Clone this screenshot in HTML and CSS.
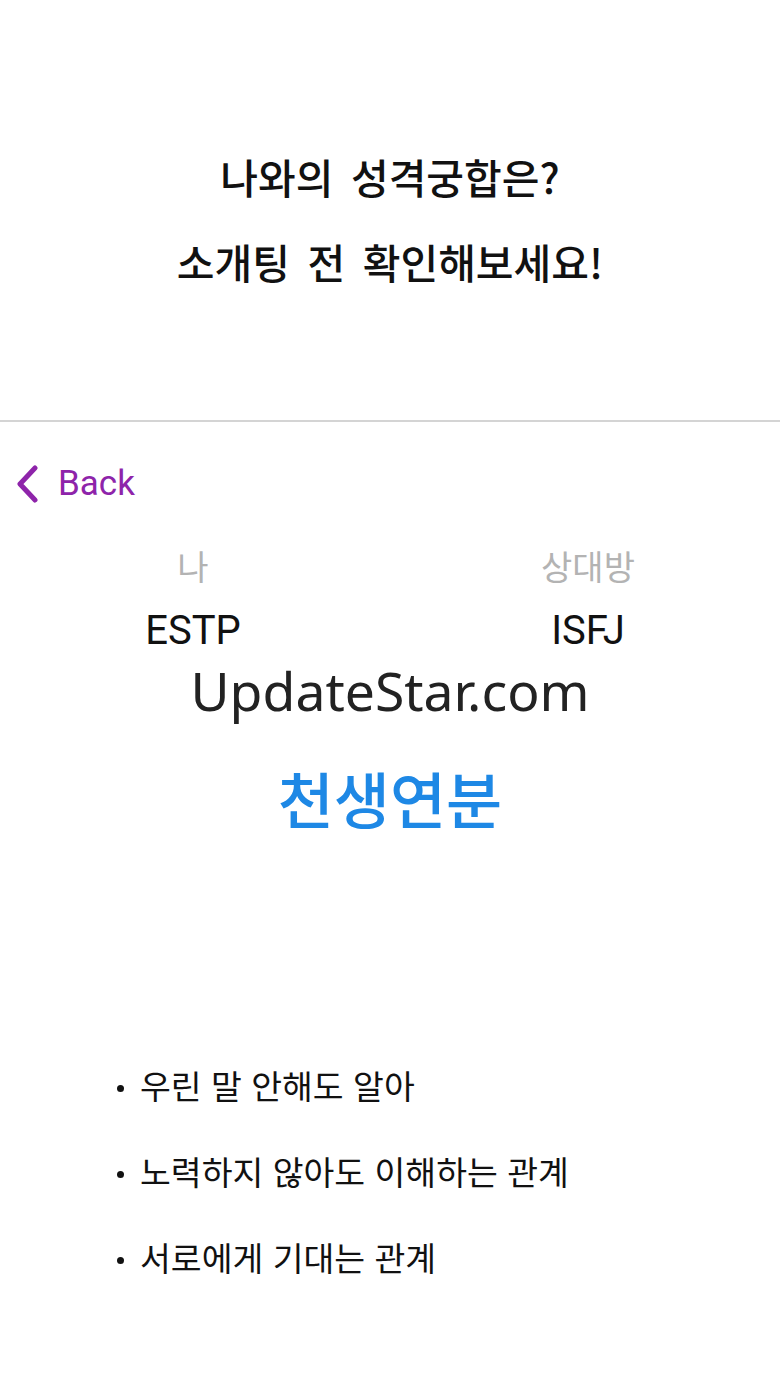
FILE: index.html
```html
<!DOCTYPE html>
<html lang="ko">
<head>
<meta charset="utf-8">
<link rel="stylesheet" href="styles.css">
</head>
<body>
<header class="hero">
  <p class="hero-line">나와의 성격궁합은?</p>
  <p class="hero-line">소개팅 전 확인해보세요!</p>
</header>
<main class="result">
  <a class="back" href="#">
    <svg class="back-icon" width="26" height="38" viewBox="0 0 26 38"><path d="M21 3 L6 19 L21 35" fill="none" stroke="#8e24aa" stroke-width="5" stroke-linecap="round" stroke-linejoin="round"/></svg>
    <span class="back-text">Back</span>
  </a>
  <div class="pair">
    <div class="person">
      <div class="label">나</div>
      <div class="type">ESTP</div>
    </div>
    <div class="person">
      <div class="label">상대방</div>
      <div class="type">ISFJ</div>
    </div>
  </div>
  <div class="watermark">UpdateStar.com</div>
  <div class="verdict">천생연분</div>
  <ul class="points">
    <li class="point"><span class="dot"></span>우린 말 안해도 알아</li>
    <li class="point"><span class="dot"></span>노력하지 않아도 이해하는 관계</li>
    <li class="point"><span class="dot"></span>서로에게 기대는 관계</li>
  </ul>
</main>
</body>
</html>
```

FILE: styles.css
```css
html, body {
  margin: 0;
  padding: 0;
  background: #ffffff;
}
body {
  width: 780px;
  font-family: "Noto Sans CJK KR", "Noto Sans", sans-serif;
  color: #111;
}
.hero {
  height: 422px;
  box-sizing: border-box;
  padding-top: 134px;
  border-bottom: 2px solid #d4d4d4;
  text-align: center;
}
.hero-line {
  margin: 0;
  font-size: 41px;
  line-height: 85px;
  font-weight: 500;
  word-spacing: 6px;
  color: #111;
}
.result {
  display: flex;
  flex-direction: column;
}
.back {
  display: flex;
  align-items: center;
  margin-top: 37px;
  height: 50px;
  padding-left: 14px;
  text-decoration: none;
}
.back-icon {
  display: block;
}
.back-text {
  margin-left: 18px;
  font-family: Roboto, "Liberation Sans", sans-serif;
  font-size: 35px;
  color: #8e24aa;
  line-height: 50px;
}
.pair {
  display: grid;
  grid-template-columns: 1fr 1fr;
  margin-top: 37px;
}
.person {
  display: flex;
  flex-direction: column;
  align-items: center;
}
.person:first-child {
  padding-right: 4px;
}
.person:last-child {
  padding-left: 6px;
}
.label {
  font-size: 34px;
  line-height: 40px;
  color: #b3b3b3;
}
.type {
  margin-top: 20px;
  font-family: Roboto, "Liberation Sans", sans-serif;
  font-size: 40px;
  line-height: 50px;
  color: #111;
}
.watermark {
  margin-top: 5px;
  text-align: center;
  font-family: "Noto Sans", "Open Sans", sans-serif;
  font-size: 53.5px;
  line-height: 60px;
  color: #222;
}
.verdict {
  margin-top: 42px;
  text-align: center;
  font-size: 61px;
  line-height: 70px;
  font-weight: 500;
  color: #1e88e5;
}
.points {
  list-style: none;
  margin: 209px 0 0 0;
  padding: 0 0 0 117px;
}
.point {
  display: flex;
  align-items: center;
  font-size: 33.5px;
  line-height: 86px;
  color: #111;
}
.dot {
  width: 7px;
  height: 7px;
  border-radius: 50%;
  background: #111;
  margin-right: 16px;
  margin-top: 6px;
}
```
